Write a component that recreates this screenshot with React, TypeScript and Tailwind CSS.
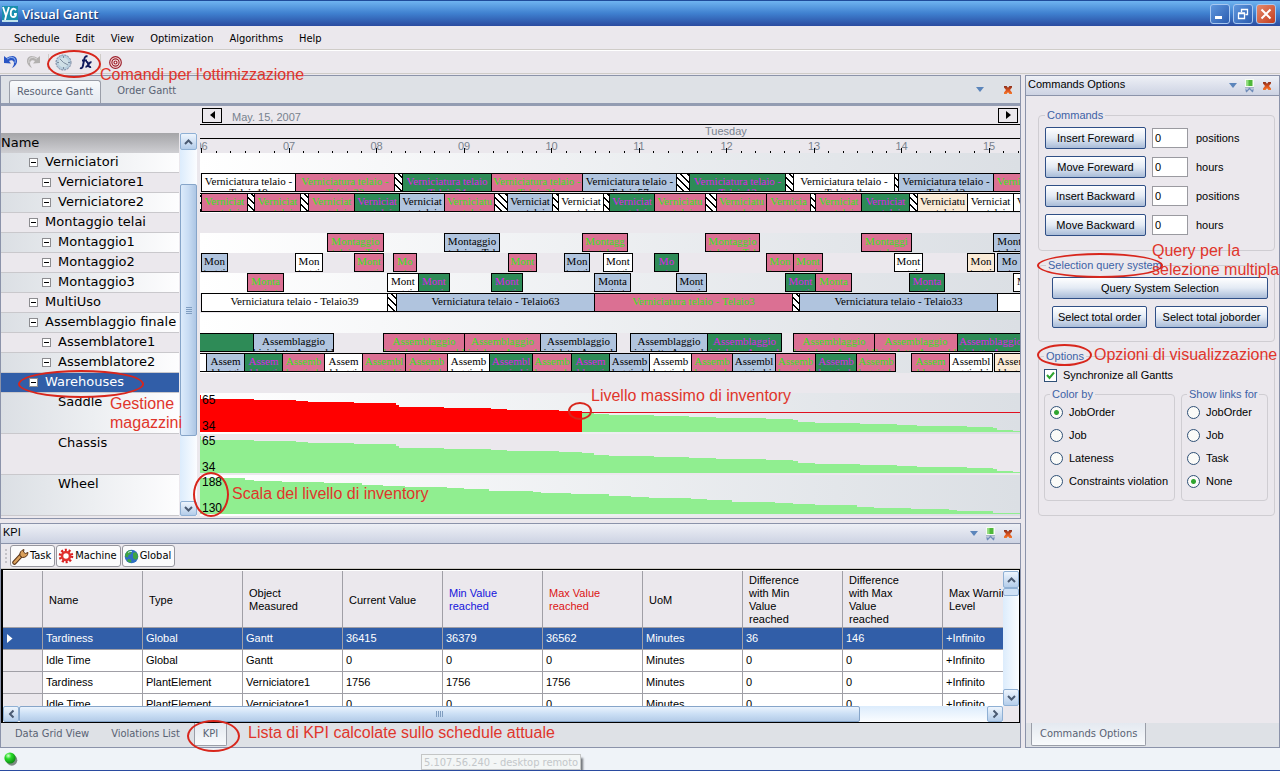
import React from "react";

const UI = "font-['DejaVu_Sans_Condensed','DejaVu_Sans',sans-serif]";
const SANS = "font-['Liberation_Sans',Arial,sans-serif]";

/* ---------- schedule data ---------- */

type Tone = "W" | "P" | "G" | "B" | "A" | "H";
type Bar = [start: number, end: number, tone: Tone, line1?: string, line2?: string];

const TONES: Record<Tone, string> = {
  W: "bg-white text-black",
  P: "bg-[#db7093] text-[#36e41e]",
  G: "bg-[#2e8b57] text-[#dc1ee6]",
  B: "bg-[#b0c4de] text-black",
  A: "bg-[#faebd7] text-black",
  H: "bg-[repeating-linear-gradient(45deg,#fff_0px,#fff_4px,#000_4px,#000_5px)]",
};

const V = "Verniciatura telaio -";
const AS = "Assemblaggio";
const BI = "biciclette Assembl";

const LANES: Bar[][] = [
  [],
  [
    [1, 96, "W", V, "Telaio19"], [95, 195, "P", V, "Telaio33"], [194, 203, "H"],
    [202, 292, "G", "Verniciatura telaio", "Telaio24"], [291, 383, "P", V, "Telaio31"],
    [382, 477, "B", V, "Telaio57"], [476, 490, "H"], [489, 586, "G", V, "Telaio13"],
    [585, 594, "H"], [593, 695, "W", V, "Telaio21"], [694, 699, "H"],
    [698, 794, "B", V, "Telaio12"], [793, 888, "P", V, "Telaio15"],
  ],
  [
    [-6, 2, "H"], [1, 48, "P", "Verniciat", "ura telaio"], [47, 55, "H"], [54, 101, "P", "Verniciat", "ura telaio"],
    [100, 109, "H"], [108, 155, "P", "Verniciat", "ura telaio"], [154, 200, "G", "Verniciat", "ura telaio"],
    [199, 245, "B", "Verniciat", "ura telaio"], [244, 295, "P", "Verniciatu", "ra telaio"], [294, 308, "H"],
    [307, 353, "B", "Verniciat", "ura telaio"], [352, 359, "H"], [358, 404, "W", "Verniciat", "ura telaio"],
    [403, 410, "H"], [409, 455, "G", "Verniciat", "ura telaio"], [454, 506, "P", "Verniciatu", "ra telaio"],
    [505, 517, "H"], [516, 567, "P", "Verniciatu", "ra telaio"], [566, 611, "P", "Vernicia", "tura telaio"],
    [610, 616, "H"], [615, 662, "P", "Verniciat", "ura telaio"], [661, 710, "G", "Verniciat", "ura telaio"],
    [709, 718, "H"], [717, 768, "A", "Verniciatu", "ra telaio"], [767, 814, "W", "Verniciat", "ura telaio"],
    [813, 860, "W", "Verniciat", "ura telaio"],
  ],
  [],
  [
    [127, 184, "P", "Montaggio", "telaio - Tel"], [244, 300, "B", "Montaggio", "telaio - Tel"],
    [382, 428, "P", "Montagg", "io telaio"], [505, 560, "P", "Montaggio", "telaio - Tel"],
    [661, 712, "P", "Montaggi", "o telaio"], [793, 850, "B", "Montaggio", "telaio - Tel"],
  ],
  [
    [1, 28, "B", "Mon", "taggi"], [95, 123, "W", "Mon", "taggi"], [154, 184, "P", "Mont", "aggi"],
    [193, 217, "P", "Mo", "nta"], [308, 337, "P", "Mont", "aggi"], [364, 390, "B", "Mon", "taggi"],
    [403, 433, "W", "Mont", "aggi"], [454, 479, "G", "Mo", "nta"], [566, 594, "P", "Mon", "taggi"],
    [593, 623, "P", "Mont", "aggi"], [694, 723, "W", "Mont", "aggi"], [767, 795, "A", "Mon", "taggi"],
    [797, 822, "B", "Mo", "nta"],
  ],
  [
    [47, 84, "P", "Monta", "ggio t"], [187, 219, "W", "Mont", "aggi"], [218, 250, "G", "Mont", "aggi"],
    [291, 323, "G", "Mont", "aggi"], [394, 431, "B", "Monta", "ggio t"], [476, 507, "B", "Mont", "aggi"],
    [585, 616, "G", "Mont", "aggi"], [615, 652, "P", "Monta", "ggio t"], [709, 745, "G", "Monta", "ggio t"],
    [813, 845, "W", "Mont", "aggi"],
  ],
  [
    [1, 188, "W", "Verniciatura telaio - Telaio39"], [187, 197, "H"],
    [196, 395, "B", "Verniciatura telaio - Telaio63"], [394, 593, "P", "Verniciatura telaio - Telaio3"],
    [592, 600, "H"], [599, 798, "B", "Verniciatura telaio - Telaio33"], [797, 900, "W"],
  ],
  [],
  [
    [-2, 54, "G"], [53, 134, "B", AS, BI], [183, 265, "P", AS, BI], [264, 341, "P", AS, BI],
    [340, 417, "B", AS, BI], [430, 508, "B", AS, BI], [507, 582, "G", AS, BI], [593, 675, "P", AS, BI],
    [674, 758, "P", AS, BI], [757, 824, "G", AS, BI],
  ],
  [
    [-10, 7, "W"], [6, 45, "B", "Assem", "blaggi"], [44, 83, "G", "Assem", "blaggi"], [82, 125, "P", "Assemb", "laggio b"],
    [124, 163, "W", "Assem", "blaggi"], [162, 206, "P", "Assembl", "aggio bi"], [205, 248, "P", "Assemb", "laggio b"],
    [247, 290, "W", "Assemb", "laggio b"], [289, 333, "G", "Assembl", "aggio bi"], [332, 372, "P", "Assemb", "laggio b"],
    [371, 410, "G", "Assem", "blaggi"], [409, 450, "B", "Assemb", "laggio b"], [449, 492, "W", "Assemb", "laggio b"],
    [491, 533, "P", "Assemb", "laggio b"], [532, 576, "B", "Assembl", "aggio bi"], [575, 616, "P", "Assemb", "laggio b"],
    [615, 657, "G", "Assemb", "laggio b"], [656, 696, "P", "Assemb", "laggio b"], [711, 750, "P", "Assem", "blaggi"],
    [749, 793, "W", "Assembl", "aggio bi"], [794, 830, "A", "Assem", "blaggi"],
  ],
  [],
];

const STOCK: [number, number][] = [
  [54, 6], [96, 7], [108, 8], [154, 9], [196, 10], [199, 12], [202, 14], [244, 14], [291, 15], [307, 16],
  [359, 17], [382, 18], [394, 19], [409, 21], [454, 22], [489, 23], [516, 24], [566, 25], [593, 26],
  [598, 27], [615, 29], [660, 30], [697, 31], [717, 32], [767, 33], [793, 34], [797, 35], [813, 37], [840, 38],
];
const WHEELS: [number, number][] = [
  [45, 3], [54, 5], [82, 6], [124, 7], [162, 8], [183, 10], [205, 11], [247, 12], [264, 13], [289, 14],
  [333, 16], [341, 17], [371, 18], [409, 19], [431, 21], [449, 22], [491, 23], [507, 24], [532, 25],
  [575, 27], [593, 28], [615, 29], [657, 30], [674, 32], [711, 33], [749, 34], [757, 35], [793, 36], [840, 38],
];

function area(steps: [number, number][], from = 0, to = 840) {
  let d = `M${from} 39`;
  let x = from;
  for (const [end, y] of steps) {
    if (end <= from) continue;
    d += `L${x} ${y}`;
    x = Math.min(end, to);
    d += `L${x} ${y}`;
    if (end >= to) break;
  }
  return d + `L${x} 39Z`;
}

const TREE: { name: string; depth: number; kind: "node" | "leaf"; h: string }[] = [
  { name: "Verniciatori", depth: 1, kind: "node", h: "h-5" },
  { name: "Verniciatore1", depth: 2, kind: "node", h: "h-5" },
  { name: "Verniciatore2", depth: 2, kind: "node", h: "h-5" },
  { name: "Montaggio telai", depth: 1, kind: "node", h: "h-5" },
  { name: "Montaggio1", depth: 2, kind: "node", h: "h-5" },
  { name: "Montaggio2", depth: 2, kind: "node", h: "h-5" },
  { name: "Montaggio3", depth: 2, kind: "node", h: "h-5" },
  { name: "MultiUso", depth: 1, kind: "node", h: "h-5" },
  { name: "Assemblaggio finale", depth: 1, kind: "node", h: "h-5" },
  { name: "Assemblatore1", depth: 2, kind: "node", h: "h-5" },
  { name: "Assemblatore2", depth: 2, kind: "node", h: "h-5" },
  { name: "Warehouses", depth: 1, kind: "node", h: "h-5" },
  { name: "Saddle", depth: 2, kind: "leaf", h: "h-[41px]" },
  { name: "Chassis", depth: 2, kind: "leaf", h: "h-[41px]" },
  { name: "Wheel", depth: 2, kind: "leaf", h: "h-[41px]" },
];

/* ---------- small shared parts ---------- */

function Ring({ className }: { className: string }) {
  return <div className={`pointer-events-none absolute z-20 rounded-[50%] border-2 border-[#d8261c] ${className}`} />;
}

function Note({ className, children }: { className: string; children: React.ReactNode }) {
  return (
    <p className={`pointer-events-none absolute z-20 whitespace-nowrap text-base text-[#e0352b] ${SANS} ${className}`}>
      {children}
    </p>
  );
}

function CloseX() {
  return (
    <svg width="10" height="10" viewBox="0 0 10 10">
      <defs>
        <linearGradient id="closeFill" x1="0" y1="0" x2="0" y2="1">
          <stop offset="0" stopColor="#8a2f1c" />
          <stop offset="0.6" stopColor="#e2561f" />
          <stop offset="1" stopColor="#f07a2c" />
        </linearGradient>
      </defs>
      <path d="M1 1h2.6L5 2.800 6.400 1H9v1.600L7 5l2 2.400V9H6.400L5 7.200 3.600 9H1V7.400L3 5 1 2.600z" fill="url(#closeFill)" />
    </svg>
  );
}

function PanelButtons({ pin = true }: { pin?: boolean }) {
  return (
    <div className="flex items-center">
      <button aria-label="Panel menu" className="flex w-4 justify-center">
        <svg width="8" height="5" viewBox="0 0 8 5"><path d="M0 0h8L4 5z" fill="#5b85bb" /></svg>
      </button>
      {pin && (
        <button aria-label="Pin panel" className="flex w-4 justify-center">
          <svg width="11" height="14" viewBox="0 0 11 14">
            <path d="M1 0h9v9H1z" fill="#f4fbf2" />
            <path d="M2.500 1h6v6h-6z" fill="#4fb83a" />
            <path d="M2.500 1h2v6h-2z" fill="#8fdc7a" />
            <path d="M1 8h9v1.500H1z" fill="#a7b3c8" />
            <path d="M2 13l3.500-3.500L9 13M1.500 10.500l2 2M9.500 10.500l-2 2" stroke="#6f8cb8" strokeWidth="1.300" fill="none" />
          </svg>
        </button>
      )}
      <button aria-label="Close panel" className={pin ? "flex w-5 justify-center" : "ml-3 flex w-4 justify-center"}>
        <CloseX />
      </button>
    </div>
  );
}

const ROTATE = { up: "rotate-0", down: "rotate-180", left: "-rotate-90", right: "rotate-90" };

function ScrollArrow({ dir, size }: { dir: keyof typeof ROTATE; size: string }) {
  return (
    <button
      aria-label={`Scroll ${dir}`}
      className={`flex shrink-0 items-center justify-center rounded-[2px] border border-[#8fb0d4] bg-linear-to-b from-[#eef5fd] to-[#b4cdea] ${size}`}
    >
      <svg width="9" height="6" viewBox="0 0 9 6" className={ROTATE[dir]}>
        <path d="M1 5l3.500-3.500L8 5" stroke="#4a5a72" strokeWidth="2" fill="none" />
      </svg>
    </button>
  );
}

/* ---------- window chrome ---------- */

function TitleBar() {
  const btn = "flex h-5 w-5 items-center justify-center rounded-[3px] border border-[#a9c8f0]";
  return (
    <header className="flex h-[26px] shrink-0 items-center border-t border-[#1f4b9a] bg-linear-to-b from-[#6fb4f0] via-[#3f80cf] to-[#2a4ba0] pr-1 pl-0.5">
      <svg width="16" height="16" viewBox="0 0 16 16" className="shrink-0">
        <path d="M0 0h16v16H0z" fill="#1a8fae" />
        <path d="M1 1l3 9L7 1M4 10l-1 4" stroke="#fff" strokeWidth="1.800" fill="none" />
        <path d="M14 4q-3-3-5 1-1 6 2 6 3 0 3-3h-2" stroke="#fff" strokeWidth="1.800" fill="none" />
        <path d="M0 14h16v2H0z" fill="#bfe3ec" />
      </svg>
      <h1 className="ml-1 flex-1 font-['Open_Sans',sans-serif] text-[13px] leading-5 font-semibold text-white [text-shadow:1px_1px_1px_#12306e]">
        Visual Gantt
      </h1>
      <div className="flex gap-[3px]">
        <button aria-label="Minimize" className={`${btn} bg-linear-to-br from-[#5f97dd] to-[#2b5cb0]`}>
          <svg width="12" height="12" viewBox="0 0 12 12"><path d="M1 8h7v3H1z" fill="#fff" /></svg>
        </button>
        <button aria-label="Restore" className={`${btn} bg-linear-to-br from-[#5f97dd] to-[#2b5cb0]`}>
          <svg width="12" height="12" viewBox="0 0 12 12">
            <path d="M4.500 4V1.500h6v5H8.500M4 1.500h7M1.500 5.500h6v5h-6zM1 5h7" stroke="#fff" strokeWidth="1.300" fill="none" />
          </svg>
        </button>
        <button aria-label="Close" className={`${btn} bg-linear-to-br from-[#e58a6c] to-[#c23a1a]`}>
          <svg width="12" height="12" viewBox="0 0 12 12"><path d="M1.500 1.500l9 9M10.500 1.500l-9 9" stroke="#fff" strokeWidth="2" /></svg>
        </button>
      </div>
    </header>
  );
}

function MenuBar() {
  return (
    <nav className={`flex h-6 shrink-0 items-center gap-4 border-b border-[#cfccc8] pt-[3px] pl-3.5 text-[11px] text-black ${UI}`}>
      {["Schedule", "Edit", "View", "Optimization", "Algorithms", "Help"].map((m) => (
        <button key={m}>{m}</button>
      ))}
    </nav>
  );
}

function ToolBar() {
  return (
    <div className="relative flex h-6 shrink-0 items-center border-t border-b border-t-white border-b-[#cfccc8] pl-1">
      <button aria-label="Undo" className="mr-2">
        <svg width="14" height="14" viewBox="0 0 14 14">
          <path d="M0 1l2.500 2Q5 1 9 1q4.500 1 4 6-1 4-5 6 3-4 1.500-6.500Q8 4.500 5 6l2 2.500L0 8z" fill="#2a55c4" />
          <path d="M3 4q4-3 7-1 2 2 1 5" stroke="#8fb4f2" fill="none" />
        </svg>
      </button>
      <button aria-label="Redo" className="mr-2">
        <svg width="14" height="14" viewBox="0 0 14 14">
          <path d="M14 1l-2.500 2Q9 1 5 1 .5 2 1 7q1 4 5 6-3-4-1.500-6.500Q6 4.500 9 6L7 8.500 14 8z" fill="#b3b1b0" />
          <path d="M11 4Q7 1 4 3 2 5 3 8" stroke="#d8d6d6" fill="none" />
        </svg>
      </button>
      <div className="mr-1.5 h-4 w-px bg-[#cfccc8]" />
      <button aria-label="Schedule times" className="mr-[7px]">
        <svg width="17" height="17" viewBox="0 0 17 17">
          <circle cx="8.500" cy="8.500" r="7.500" fill="#b7cddd" stroke="#6f7f9a" strokeDasharray="2 1" />
          <circle cx="8.500" cy="8.500" r="5" fill="#cfdfe6" />
          <path d="M5 5l3.500 3.500L13 11M8.500 2v2M8.500 13v2M2 8.500h2M13 8.500h2" stroke="#7d8da0" fill="none" />
        </svg>
      </button>
      <button aria-label="Function" className="mr-[7px]">
        <svg width="14" height="15" viewBox="0 0 14 15">
          <path d="M8.500 1.500Q6 .5 5.300 4L4 10.500Q3.300 14 1 13M3 5.500h5" stroke="#10195a" strokeWidth="1.900" fill="none" />
          <path d="M7 7q1.500-.5 2 1.500l.8 2.500q.5 1.500 2.200.8M12.500 7Q11 7 9.500 9.500T6.500 12" stroke="#10195a" strokeWidth="1.900" fill="none" />
        </svg>
      </button>
      <div className="mr-2 h-4 w-px bg-[#cfccc8]" />
      <button aria-label="Target">
        <svg width="13" height="13" viewBox="0 0 13 13">
          <circle cx="6.500" cy="6.500" r="5.800" fill="#fbeeee" stroke="#9c1f2b" strokeWidth="1.200" />
          <circle cx="6.500" cy="6.500" r="3.600" fill="none" stroke="#9c1f2b" strokeWidth="1.200" />
          <circle cx="6.500" cy="6.500" r="1.500" fill="#fff" stroke="#9c1f2b" strokeWidth="1.200" />
        </svg>
      </button>
      <Ring className="-top-px left-[47px] h-7 w-[54px]" />
      <Note className="top-3.5 left-[100px] leading-5">Comandi per l'ottimizzazione</Note>
    </div>
  );
}

/* ---------- gantt ---------- */

function ResourceTree() {
  return (
    <div className="relative mt-[27px] flex w-[197px] shrink-0">
      <div className="w-[178px] font-['DejaVu_Sans',sans-serif] text-[13px] text-black">
        <div className="flex h-5 items-center bg-linear-to-b from-[#a5a5a8] to-[#cfcfd3]">
          <span className="leading-4">Name</span>
        </div>
        {TREE.map((r, i) => {
          const selected = r.name === "Warehouses";
          const bg = selected
            ? "bg-[#315ea8] text-white"
            : i % 2 === 0
              ? "bg-linear-to-r from-[#dbdfe4] to-[#fdfdfe]"
              : "bg-[#ebe8ed]";
          return (
            <div
              key={r.name}
              className={`flex items-start border-b border-[#c9c8cc] ${r.h} ${bg} ${r.depth === 1 ? "pl-7" : "pl-[41px]"}`}
            >
              {r.kind === "node" ? (
                <button aria-label={`Collapse ${r.name}`} className="mt-[5px] mr-[7px] flex h-[9px] w-[9px] items-center justify-center border border-[#8c8c90] bg-white">
                  <span className="h-px w-[5px] bg-black" />
                </button>
              ) : (
                <span className="w-4" />
              )}
              <span className="leading-[17px] whitespace-nowrap">{r.name}</span>
            </div>
          );
        })}
      </div>
      <div className="ml-px flex w-[17px] flex-col bg-linear-to-r from-[#dcecfc] to-[#fbfdff]">
        <ScrollArrow dir="up" size="h-[17px] w-[17px]" />
        <div className="mt-[34px] flex h-[252px] flex-col items-center justify-center gap-px rounded-[2px] border border-[#86a5c9] bg-linear-to-r from-[#dcebfb] via-[#c8dcf3] to-[#adc6e4]">
          {[0, 1, 2, 3].map((n) => (
            <span key={n} className="h-px w-1.5 bg-[#7f9dc0]" />
          ))}
        </div>
        <div className="flex-1" />
        <ScrollArrow dir="down" size="h-[15px] w-[17px]" />
      </div>
      <Ring className="top-[237px] left-[17px] h-7 w-[126px]" />
      <Note className="top-[261px] left-[109px] leading-[19px]">
        Gestione
        <br />
        magazzini
      </Note>
    </div>
  );
}

function TaskBar({ bar: [start, end, tone, line1, line2] }: { bar: Bar }) {
  return (
    <div
      className={`absolute top-0 flex h-[19px] flex-col items-center overflow-hidden border border-black font-['Liberation_Serif',serif] text-[11px] leading-[11px] whitespace-nowrap ${TONES[tone]}`}
      style={{ left: start, width: end - start }}
    >
      {line1 && <span className="mt-0.5">{line1}</span>}
      {line2 && <span>{line2}</span>}
    </div>
  );
}

function StockRow({ high, low, steps, limit, shaded }: { high: string; low: string; steps: [number, number][]; limit?: number; shaded: boolean }) {
  return (
    <div className={`relative h-[41px] overflow-hidden ${shaded ? "bg-linear-to-r from-white to-[#dbdfe4]" : "bg-[#ebe8ed]"}`}>
      <svg width="840" height="41" viewBox="0 0 840 41" className="block max-w-none" shapeRendering="crispEdges">
        <path d={area(steps)} fill="#90ee90" />
        <path d="M0 2h1v37H0z" fill="#90ee90" />
        {limit && (
          <>
            <path d={area(steps, 0, limit)} fill="#ff0000" />
            <path d="M0 2h1v37H0z" fill="#ff0000" />
            <path d={`M${limit} 19h458v1h-458z`} fill="#e01020" />
          </>
        )}
      </svg>
      <div className={`absolute top-0 left-0.5 flex h-10 flex-col justify-between text-xs leading-[14px] text-black ${SANS}`}>
        <span>{high}</span>
        <span>{low}</span>
      </div>
    </div>
  );
}

function Timeline() {
  const hours = ["06", "07", "08", "09", "10", "11", "12", "13", "14", "15"];
  return (
    <div className="relative ml-0.5 min-w-0 flex-1">
      <div className={`flex h-[19px] items-center border-b border-black pr-0.5 pl-0.5 text-[11px] text-[#78828e] ${SANS}`}>
        <button aria-label="Previous day" className="flex h-[15px] w-5 items-center justify-center border border-black">
          <svg width="5" height="8" viewBox="0 0 5 8"><path d="M5 0v8L0 4z" /></svg>
        </button>
        <span className="ml-2.5 flex-1 pt-1">May. 15, 2007</span>
        <button aria-label="Next day" className="flex h-[15px] w-5 items-center justify-center border border-black">
          <svg width="5" height="8" viewBox="0 0 5 8"><path d="M0 0v8l5-4z" /></svg>
        </button>
      </div>
      <div className={`h-3.5 border-b border-black pl-[505px] text-[11px] leading-[13px] text-[#78828e] ${SANS}`}>Tuesday</div>
      <div className="h-3.5 overflow-hidden">
        <svg width="840" height="14" viewBox="0 0 840 14" className="block max-w-none">
          {hours.map((h, i) => (
            <text key={h} x={1.5 + i * 87.5} y="11" textAnchor="middle" fontSize="11" fill="#78828e" fontFamily="Liberation Sans, Arial, sans-serif">
              {h}
            </text>
          ))}
          {Array.from({ length: 57 }, (_, i) => {
            const x = Math.round(1 + (i * 87.5) / 6);
            const top = i % 6 === 0 ? 9 : 12;
            return <path key={i} d={`M${x} ${top}h1V14h-1z`} fill="#000" />;
          })}
        </svg>
      </div>
      <div className="overflow-hidden">
        {LANES.map((bars, i) => (
          <div key={i} className={`relative h-5 ${i % 2 === 0 ? "bg-linear-to-r from-white to-[#dbdfe4]" : "bg-[#ebe8ed]"}`}>
            {bars.map((b, n) => (
              <TaskBar key={n} bar={b} />
            ))}
          </div>
        ))}
        <StockRow high="65" low="34" steps={STOCK} limit={382} shaded />
        <StockRow high="65" low="34" steps={STOCK} shaded={false} />
        <StockRow high="188" low="130" steps={WHEELS} shaded />
      </div>
      <Ring className="top-[296px] left-[368px] h-[18px] w-6" />
      <Note className="top-[280px] left-[391px] leading-5">Livello massimo di inventory</Note>
      <Ring className="top-[366px] -left-[7px] h-[45px] w-9" />
      <Note className="top-[378px] left-8 leading-5">Scala del livello di inventory</Note>
    </div>
  );
}

function GanttPanel() {
  return (
    <section className="shrink-0 border border-[#8b93aa] pb-0.5">
      <div className={`flex h-[27px] items-end bg-[#dee1e6] pl-2 text-[11px] text-[#596273] ${UI}`}>
        <button className="h-[23px] rounded-t-[3px] border border-b-0 border-[#9a9ea8] bg-linear-to-b from-[#f8fafc] to-[#e4e9f0] px-[7px]">
          Resource Gantt
        </button>
        <button className="h-[23px] px-4">Order Gantt</button>
        <div className="flex-1" />
        <div className="mr-1 flex h-[27px] items-center">
          <PanelButtons pin={false} />
        </div>
      </div>
      <div className="h-[3px] bg-[#939cb2]" />
      <div className="flex">
        <ResourceTree />
        <Timeline />
      </div>
    </section>
  );
}

/* ---------- KPI ---------- */

const COLUMNS: { label: string; tone?: string }[] = [
  { label: "Name" }, { label: "Type" }, { label: "Object\nMeasured" }, { label: "Current Value" },
  { label: "Min Value\nreached", tone: "text-[#1414dc]" }, { label: "Max Value\nreached", tone: "text-[#dc1414]" },
  { label: "UoM" }, { label: "Difference\nwith Min\nValue\nreached" }, { label: "Difference\nwith Max\nValue\nreached" },
  { label: "Max Warning\nLevel" },
];

const KPI_ROWS = [
  ["Tardiness", "Global", "Gantt", "36415", "36379", "36562", "Minutes", "36", "146", "+Infinito"],
  ["Idle Time", "Global", "Gantt", "0", "0", "0", "Minutes", "0", "0", "+Infinito"],
  ["Tardiness", "PlantElement", "Verniciatore1", "1756", "1756", "1756", "Minutes", "0", "0", "+Infinito"],
  ["Idle Time", "PlantElement", "Verniciatore1", "0", "0", "0", "Minutes", "0", "0", "+Infinito"],
];

function KpiButton({ icon, children }: { icon: React.ReactNode; children: React.ReactNode }) {
  return (
    <button className="flex h-[22px] items-center gap-px rounded-[3px] border border-[#96969e] bg-[#fbfbfc] pr-[3px] pl-px">
      {icon}
      <span className="pt-px">{children}</span>
    </button>
  );
}

function KpiPanel() {
  return (
    <section className="flex min-h-0 flex-1 flex-col border border-[#8b93aa]">
      <div className={`flex h-5 shrink-0 items-center justify-between border-b border-[#8b93aa] bg-linear-to-b from-[#eef0f6] to-[#cdd3e3] pr-0.5 pl-0.5 text-[11px] text-black ${SANS}`}>
        <h2 className="pb-0.5">KPI</h2>
        <PanelButtons />
      </div>
      <div className={`flex h-[25px] shrink-0 items-center gap-px border-b border-[#cfccc8] pl-1 text-[11px] text-black ${UI}`}>
        <div className="mr-0.5 h-3.5 border-l-2 border-dotted border-[#c4c2c8]" />
        <KpiButton
          icon={
            <svg width="17" height="17" viewBox="0 0 17 17">
              <path d="M2.500 14.500L9 7.500" stroke="#5a3417" strokeWidth="4.500" strokeLinecap="round" />
              <path d="M2.500 14.500L9 7.500" stroke="#d9a05c" strokeWidth="2.500" strokeLinecap="round" />
              <path d="M8 8Q7 3 12 1.500L11.500 4l1.800 1.500L16 4.500Q15.500 9.500 10.500 9.500z" fill="#d9a05c" stroke="#5a3417" />
            </svg>
          }
        >
          Task
        </KpiButton>
        <KpiButton
          icon={
            <svg width="16" height="16" viewBox="0 0 16 16">
              <circle cx="8" cy="8" r="6" fill="none" stroke="#d81e1e" strokeWidth="2.600" strokeDasharray="2 1.770" />
              <circle cx="8" cy="8" r="4" fill="#fff" stroke="#e03030" strokeWidth="2.600" />
            </svg>
          }
        >
          Machine
        </KpiButton>
        <KpiButton
          icon={
            <svg width="15" height="15" viewBox="0 0 15 15">
              <circle cx="7.500" cy="7.500" r="6.800" fill="#2f6fc4" />
              <path d="M3 2.500Q6 .5 8 2L7 5 4.500 6 4 8.500 1 7.500Q1 4.500 3 2.500zM9 4l3-1q2.500 3 2 6l-2.500 2L9 9zM4 10l3 .5.500 3Q4.500 13.500 3 12z" fill="#3fa542" />
              <path d="M4 3.500q2-1.500 4-1" stroke="#bfe3f2" fill="none" />
            </svg>
          }
        >
          Global
        </KpiButton>
      </div>
      <div className="flex min-h-0 flex-1 flex-col border border-l-2 border-black bg-[#ebe8ed]">
        <div className="flex min-h-0 flex-1 border-t border-white">
          <div className="min-w-0 flex-1 overflow-hidden">
            <table className={`w-[1040px] table-fixed border-separate border-spacing-0 text-[11px] leading-[13px] text-black ${SANS}`}>
              <colgroup>
                <col className="w-10" />
                {COLUMNS.map((c) => (
                  <col key={c.label} className="w-[100px]" />
                ))}
              </colgroup>
              <thead>
                <tr className="h-[57px]">
                  <th aria-label="Row marker" className="border-r border-b border-[#a09fa6] p-0" />
                  {COLUMNS.map((c) => (
                    <th
                      key={c.label}
                      className={`h-[57px] border-r border-b border-[#a09fa6] p-0 pt-0.5 pl-1.5 text-left align-middle font-normal whitespace-pre ${c.tone ?? ""}`}
                    >
                      {c.label}
                    </th>
                  ))}
                </tr>
              </thead>
              <tbody>
                {KPI_ROWS.map((row, i) => (
                  <tr key={i} className={i === 0 ? "bg-[#315ea8] text-white" : "bg-white"}>
                    <td className={`h-[22px] border-r border-b border-[#a09fa6] p-0 pl-1 ${i === 0 ? "" : "bg-[#ebe8ed]"}`}>
                      {i === 0 && (
                        <svg width="6" height="9" viewBox="0 0 6 9"><path d="M0 0v9l5.500-4.500z" fill="#fff" /></svg>
                      )}
                    </td>
                    {row.map((cell, n) => (
                      <td key={n} className="h-[22px] border-r border-b border-[#a09fa6] p-0 pl-[3px]">
                        {cell}
                      </td>
                    ))}
                  </tr>
                ))}
              </tbody>
            </table>
          </div>
          <div className="flex w-4 shrink-0 flex-col bg-linear-to-r from-[#dcecfc] to-[#fbfdff]">
            <ScrollArrow dir="up" size="h-[17px] w-4" />
            <div className="h-2 rounded-[2px] border border-[#8fb0d4] bg-[#cfe1f6]" />
            <div className="flex-1" />
            <ScrollArrow dir="down" size="h-[17px] w-4" />
          </div>
        </div>
        <div className="flex h-4 shrink-0 bg-linear-to-b from-[#dcecfc] to-[#fbfdff]">
          <ScrollArrow dir="left" size="h-4 w-4" />
          <div className="flex w-[841px] items-center justify-center gap-px rounded-[2px] border border-[#86a5c9] bg-linear-to-b from-[#eaf3fd] via-[#cbdff5] to-[#b4cce8]">
            {[0, 1, 2, 3].map((n) => (
              <span key={n} className="h-1.5 w-px bg-[#7f9dc0]" />
            ))}
          </div>
          <div className="flex-1" />
          <ScrollArrow dir="right" size="h-4 w-4" />
          <div className="w-4 bg-[#ebe8ed]" />
        </div>
      </div>
      <div className={`relative flex h-6 shrink-0 items-start bg-[#dee1e6] text-[11px] text-[#596273] ${UI}`}>
        <button className="ml-3.5 h-[23px]">Data Grid View</button>
        <button className="ml-[22px] h-[23px]">Violations List</button>
        <button className="ml-[14px] h-[23px] rounded-b-[2px] border border-t-0 border-[#9a9ea8] bg-linear-to-b from-[#e4e9f0] to-[#f8fafc] px-2">KPI</button>
        <Ring className="-top-[3px] left-[186px] h-8 w-[53px]" />
        <Note className="top-0 left-[247px] leading-5">Lista di KPI calcolate sullo schedule attuale</Note>
      </div>
    </section>
  );
}

/* ---------- commands panel ---------- */

const GROUP = "min-w-0 rounded-[4px] border border-[#cfcdd2]";
const LEGEND = "px-0.5 text-[11px] leading-[14px] text-[#3d62a6]";
const PUSH =
  "h-[22px] rounded-[2px] border border-[#2f4f86] bg-linear-to-b from-white via-[#e3eaf4] to-[#a9bcd8] text-center text-[11px] leading-[18px] whitespace-nowrap text-black";

function Radio({ name, label, checked }: { name: string; label: string; checked?: boolean }) {
  return (
    <label className="flex h-[23px] items-center gap-1.5">
      <input
        type="radio"
        name={name}
        defaultChecked={checked}
        className="h-[13px] w-[13px] shrink-0 appearance-none rounded-full border border-[#2f5076] bg-[#fbfbf8] checked:bg-[radial-gradient(circle,#2fa52f_0px,#2fa52f_2px,#fbfbf8_3px)]"
      />
      <span className="whitespace-nowrap">{label}</span>
    </label>
  );
}

function CommandsPanel() {
  const commands = [
    ["Insert Foreward", "positions"],
    ["Move Foreward", "hours"],
    ["Insert Backward", "positions"],
    ["Move Backward", "hours"],
  ];
  return (
    <aside className={`relative flex w-[255px] shrink-0 flex-col border border-[#8b93aa] text-[11px] text-black ${SANS}`}>
      <div className="flex h-5 shrink-0 items-center justify-between border-b border-[#8b93aa] bg-linear-to-b from-[#eef0f6] to-[#cdd3e3] pr-0.5 pl-0.5">
        <h2 className="pb-0.5">Commands Options</h2>
        <PanelButtons />
      </div>
      <div className="flex-1 pt-3 pr-1 pl-3">
        <fieldset className={`${GROUP} h-[143px] pl-1.5`}>
          <legend className={LEGEND}>Commands</legend>
          <div className="mt-[5px] flex flex-col gap-[7px]">
            {commands.map(([label, unit]) => (
              <div key={label} className="flex items-center">
                <button className={`${PUSH} w-[101px]`}>{label}</button>
                <input
                  aria-label={`${label} ${unit}`}
                  defaultValue="0"
                  className="ml-1.5 h-5 w-9 border border-[#9a9aa0] bg-white pl-0.5 text-[11px] outline-none"
                />
                <span className="ml-2">{unit}</span>
              </div>
            ))}
          </div>
        </fieldset>
        <fieldset className={`${GROUP} mt-[7px] h-[84px] pr-1.5 pl-[13px]`}>
          <legend className={`${LEGEND} -ml-1.5`}>Selection query system</legend>
          <button className={`${PUSH} mt-[5px] w-full`}>Query System Selection</button>
          <div className="mt-[7px] flex gap-2">
            <button className={`${PUSH} w-[95px]`}>Select total order</button>
            <button className={`${PUSH} flex-1`}>Select total joborder</button>
          </div>
        </fieldset>
        <fieldset className={`${GROUP} mt-[7px] h-[167px] pr-1.5 pl-[5px]`}>
          <legend className={LEGEND}>Options</legend>
          <label className="mt-1 flex h-4 items-center gap-1.5">
            <span className="relative flex h-[13px] w-[13px]">
              <input type="checkbox" defaultChecked className="peer h-[13px] w-[13px] appearance-none border border-[#2f5076] bg-white" />
              <svg width="9" height="9" viewBox="0 0 9 9" className="pointer-events-none absolute top-0.5 left-0.5 hidden peer-checked:block">
                <path d="M1 4l2.500 3L8 1.500" stroke="#2fa52f" strokeWidth="2" fill="none" />
              </svg>
            </span>
            <span>Synchronize all Gantts</span>
          </label>
          <div className="mt-1 flex gap-1.5">
            <fieldset className={`${GROUP} h-[114px] w-[131px] pl-[5px]`}>
              <legend className={LEGEND}>Color by</legend>
              <div>
                <Radio name="color" label="JobOrder" checked />
                <Radio name="color" label="Job" />
                <Radio name="color" label="Lateness" />
                <Radio name="color" label="Constraints violation" />
              </div>
            </fieldset>
            <fieldset className={`${GROUP} h-[114px] flex-1 pl-[5px]`}>
              <legend className={LEGEND}>Show links for</legend>
              <div>
                <Radio name="links" label="JobOrder" />
                <Radio name="links" label="Job" />
                <Radio name="links" label="Task" />
                <Radio name="links" label="None" checked />
              </div>
            </fieldset>
          </div>
        </fieldset>
      </div>
      <div className={`flex h-6 shrink-0 items-start bg-[#dee1e6] pl-[5px] text-[11px] text-[#596273] ${UI}`}>
        <button className="h-[23px] rounded-b-[2px] border border-t-0 border-[#9a9ea8] bg-linear-to-b from-[#e4e9f0] to-[#f8fafc] px-2">
          Commands Options
        </button>
      </div>
      <Ring className="top-[177px] left-[11px] h-[25px] w-[126px]" />
      <Note className="top-[165px] left-[126px] leading-[19px]">
        Query per la
        <br />
        selezione multipla
      </Note>
      <Ring className="top-[268px] left-[11px] h-[22px] w-[55px]" />
      <Note className="top-[269px] left-[68px] leading-5">Opzioni di visualizzazione</Note>
    </aside>
  );
}

/* ---------- status bar ---------- */

function StatusBar() {
  return (
    <footer className="relative flex h-[23px] shrink-0 items-center overflow-hidden border-b border-[#2a4ba0] bg-[#eff3f8] pl-1">
      <svg width="14" height="14" viewBox="0 0 14 14">
        <defs>
          <radialGradient id="lamp" cx="0.350" cy="0.300" r="0.800">
            <stop offset="0" stopColor="#d6ffd0" />
            <stop offset="0.350" stopColor="#27dc27" />
            <stop offset="1" stopColor="#087a10" />
          </radialGradient>
        </defs>
        <circle cx="7.800" cy="8.200" r="5.500" fill="#7d8a84" />
        <circle cx="6" cy="6" r="5.600" fill="url(#lamp)" />
      </svg>
      <div className={`absolute top-[6px] left-[421px] h-4 border border-[#c4c6c6] bg-[#f3f6f6] px-0.5 text-[11px] leading-[15px] whitespace-nowrap text-[#c3c7ca] shadow-[2px_4px_2px_#73767c] ${UI}`}>
        5.107.56.240 - desktop remoto
      </div>
    </footer>
  );
}

export default function App() {
  return (
    <div className="flex min-h-screen flex-col overflow-hidden bg-[#ebe8ed]">
      <TitleBar />
      <MenuBar />
      <ToolBar />
      <main className="mt-px flex min-h-0 flex-1 gap-1">
        <div className="flex min-w-0 flex-1 flex-col gap-1">
          <GanttPanel />
          <div className="flex h-[225px] flex-auto flex-col">
            <KpiPanel />
          </div>
        </div>
        <CommandsPanel />
      </main>
      <StatusBar />
    </div>
  );
}
